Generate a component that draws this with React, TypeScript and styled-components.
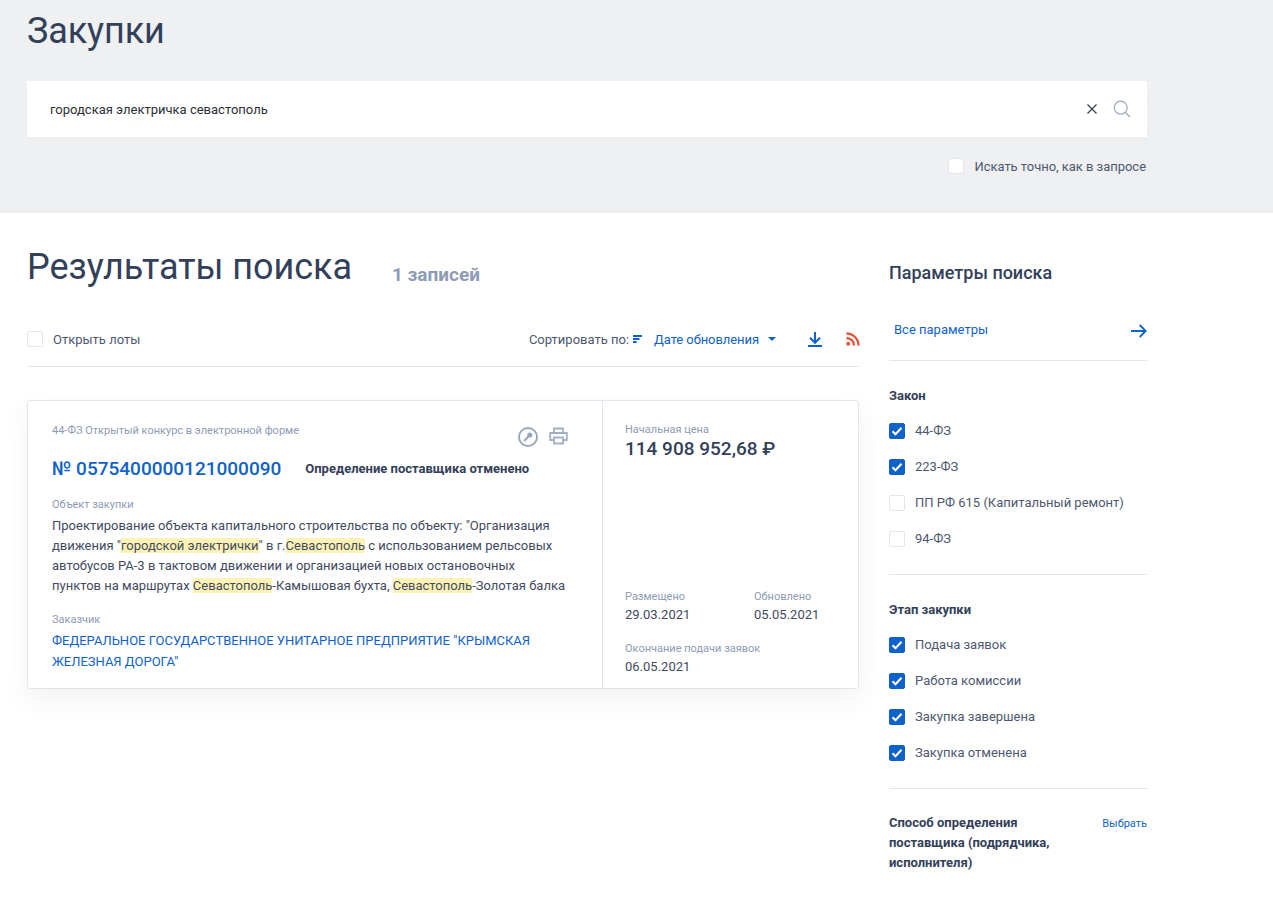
import React from "react";
import styled, { createGlobalStyle } from "styled-components";

const TEXT = "#334059";
const MUTED = "#8d9bb5";
const BLUE = "#0f62c9";
const LINE = "#e2e6ec";

const GlobalStyle = createGlobalStyle`
  html, body {
    margin: 0;
    padding: 0;
    height: 906px;
    overflow: hidden;
    background: #fff;
  }
  body {
    font-family: Roboto, "Liberation Sans", sans-serif;
    color: ${TEXT};
  }
`;

const Header = styled.header`
  height: 213px;
  box-sizing: border-box;
  padding: 0 126px 0 27px;
  background: #eef0f2;
`;

const PageTitle = styled.h1`
  margin: 0;
  height: 81px;
  padding-top: 10px;
  box-sizing: border-box;
  font-size: 36px;
  line-height: 42px;
  font-weight: 400;
  letter-spacing: -0.1px;
  color: ${TEXT};
`;

const SearchBox = styled.div`
  height: 56px;
  padding: 0 16px 0 23px;
  display: flex;
  align-items: center;
  background: #fff;
  box-shadow: 0 6px 20px rgba(51, 64, 89, 0.012);
`;

const SearchText = styled.div`
  flex: 1;
  font-size: 13px;
  color: #2b2f36;
`;

const SearchIcons = styled.div`
  display: flex;
  align-items: center;
  gap: 15px;
`;

const ExactRow = styled.div`
  margin-top: 21px;
  padding-right: 1px;
  display: flex;
  justify-content: flex-end;
  align-items: center;
  gap: 10px;
  font-size: 13px;
  letter-spacing: -0.03px;
  color: #4d5870;
`;

const Box = styled.span<{ $checked?: boolean }>`
  width: 16px;
  height: 16px;
  flex-shrink: 0;
  box-sizing: border-box;
  border-radius: 2px;
  display: inline-flex;
  align-items: center;
  justify-content: center;
  background: ${(p) => (p.$checked ? BLUE : "#fff")};
  border: 1px solid ${(p) => (p.$checked ? BLUE : "#e3e6eb")};
`;

const Main = styled.main`
  padding: 0 126px 0 27px;
  display: flex;
  gap: 30px;
  align-items: flex-start;
`;

const Results = styled.section`
  width: 832px;
  flex-shrink: 0;
`;

const ResultsHead = styled.div`
  height: 103px;
  padding-top: 33px;
  box-sizing: border-box;
  display: flex;
  align-items: flex-start;
  gap: 40px;
`;

const ResultsTitle = styled.h2`
  margin: 0;
  font-size: 36px;
  line-height: 42px;
  font-weight: 400;
  letter-spacing: -0.05px;
`;

const ResultsCount = styled.span`
  margin-top: 18px;
  font-size: 19px;
  line-height: 22px;
  font-weight: 700;
  color: ${MUTED};
`;

const Toolbar = styled.div`
  height: 46px;
  padding-bottom: 4px;
  display: flex;
  align-items: center;
  justify-content: space-between;
  border-bottom: 1px solid ${LINE};
  font-size: 13px;
`;

const OpenLots = styled.div`
  display: flex;
  align-items: center;
  gap: 10px;
  color: #4d5870;
`;

const SortGroup = styled.div`
  margin-right: -1px;
  display: flex;
  align-items: center;
  color: #4d5870;
`;

const SortValue = styled.span`
  margin-left: 12px;
  letter-spacing: -0.07px;
  color: ${BLUE};
`;

const Caret = styled.span`
  margin-left: 9px;
  width: 0;
  height: 0;
  border-left: 4px solid transparent;
  border-right: 4px solid transparent;
  border-top: 4px solid ${BLUE};
`;

const ToolIcon = styled.span<{ $gap: number }>`
  display: inline-flex;
  margin-left: ${(p) => p.$gap}px;
`;

const SortIcon = styled.svg`
  margin-left: 4px;
`;

const Card = styled.article`
  margin-top: 33px;
  height: 289px;
  box-sizing: border-box;
  display: flex;
  border: 1px solid ${LINE};
  border-radius: 3px;
  box-shadow: 0 10px 24px rgba(51, 64, 89, 0.07);
`;

const CardMain = styled.div`
  width: 575px;
  box-sizing: border-box;
  padding: 23px 24px 0;
  border-right: 1px solid ${LINE};
`;

const CardAside = styled.div`
  flex: 1;
  padding: 22px 23px 0 22px;
  display: flex;
  flex-direction: column;
`;

const TypeRow = styled.div`
  height: 26px;
  display: flex;
  justify-content: space-between;
  align-items: flex-start;
`;

const SmallLabel = styled.div`
  font-size: 11px;
  line-height: 13px;
  color: ${MUTED};
`;

const CardIcons = styled.div`
  display: flex;
  gap: 11px;
  margin-top: 3px;
  margin-right: 10px;
`;

const NumberRow = styled.div`
  margin-top: 7px;
  display: flex;
  align-items: center;
  gap: 24px;
`;

const OrderNumber = styled.a`
  font-size: 19px;
  line-height: 24px;
  font-weight: 500;
  color: ${BLUE};
`;

const Status = styled.span`
  margin-bottom: 2px;
  font-size: 13px;
  font-weight: 700;
`;

const SectionLabel = styled(SmallLabel)`
  margin-top: 17px;
`;

const Description = styled.p`
  margin: 5px 0 0;
  font-size: 13px;
  line-height: 20px;
  color: #3f4a61;
  white-space: nowrap;
`;

const Mark = styled.mark`
  background: #fef3b4;
  color: inherit;
`;

const Customer = styled.a`
  display: block;
  margin-top: 4px;
  font-size: 13px;
  line-height: 21px;
  color: ${BLUE};
  white-space: nowrap;
`;

const Price = styled.div`
  margin-top: 2px;
  font-size: 19px;
  line-height: 22px;
  font-weight: 500;
`;

const Dates = styled.div`
  margin-top: auto;
  padding-bottom: 14px;
  display: grid;
  grid-template-columns: 129px 1fr;
  row-gap: 20px;
`;

const DateCell = styled.div<{ $wide?: boolean }>`
  grid-column: ${(p) => (p.$wide ? "1 / 3" : "auto")};
`;

const DateValue = styled.div`
  margin-top: 4px;
  font-size: 13px;
  line-height: 15px;
  color: #3f4a61;
`;

const Sidebar = styled.aside`
  width: 258px;
  flex-shrink: 0;
`;

const SideTitle = styled.h3`
  margin: 0;
  padding-top: 49px;
  font-size: 18px;
  line-height: 22px;
  font-weight: 500;
`;

const AllParams = styled.div`
  margin-top: 31px;
  height: 46px;
  padding: 0 0 16px 5px;
  box-sizing: border-box;
  display: flex;
  align-items: center;
  justify-content: space-between;
  border-bottom: 1px solid ${LINE};
  font-size: 13px;
  color: ${BLUE};
`;

const ArrowIcon = styled.svg`
  margin-top: 3px;
`;

const Group = styled.div`
  padding-top: 26.5px;
  padding-bottom: 17.5px;
  border-bottom: 1px solid ${LINE};
`;

const GroupTitle = styled.div`
  font-size: 13px;
  line-height: 15px;
  font-weight: 700;
  margin-bottom: 10px;
`;

const OptionRow = styled.label`
  height: 36px;
  display: flex;
  align-items: center;
  gap: 10px;
  font-size: 13px;
  color: #4d5870;
`;

const MethodGroup = styled.div`
  padding-top: 24px;
  display: flex;
  justify-content: space-between;
  align-items: flex-start;
`;

const MethodTitle = styled.div`
  width: 175px;
  font-size: 13px;
  line-height: 20px;
  font-weight: 700;
`;

const PickLink = styled.a`
  margin-top: 3px;
  font-size: 11px;
  line-height: 15px;
  color: ${BLUE};
`;

const Check = () => (
  <svg width="12" height="10" viewBox="0 0 12 10" fill="none">
    <path d="M1.5 5.2 4.5 8.2 10.5 1.8" stroke="#fff" strokeWidth="2" />
  </svg>
);

const Option = ({ label, checked }: { label: string; checked?: boolean }) => (
  <OptionRow>
    <Box $checked={checked}>{checked && <Check />}</Box>
    {label}
  </OptionRow>
);

export default function App() {
  return (
    <>
      <GlobalStyle />
      <Header>
        <PageTitle>Закупки</PageTitle>
        <SearchBox>
          <SearchText>городская электричка севастополь</SearchText>
          <SearchIcons>
            <svg width="12" height="12" viewBox="0 0 12 12" fill="none">
              <path d="M1.5 1.5 10.5 10.5M10.5 1.5 1.5 10.5" stroke="#3b4150" strokeWidth="1.3" />
            </svg>
            <svg width="18" height="18" viewBox="0 0 18 18" fill="none">
              <circle cx="7.7" cy="7.7" r="6.5" stroke="#9aa7c0" strokeWidth="1.2" />
              <path d="M12.5 12.5 17 17" stroke="#9aa7c0" strokeWidth="1.2" />
            </svg>
          </SearchIcons>
        </SearchBox>
        <ExactRow>
          <Box />
          Искать точно, как в запросе
        </ExactRow>
      </Header>
      <Main>
        <Results>
          <ResultsHead>
            <ResultsTitle>Результаты поиска</ResultsTitle>
            <ResultsCount>1 записей</ResultsCount>
          </ResultsHead>
          <Toolbar>
            <OpenLots>
              <Box />
              Открыть лоты
            </OpenLots>
            <SortGroup>
              Сортировать по:
              <SortIcon width="9" height="8" viewBox="0 0 9 8">
                <path d="M0 0h9v2H0zM0 3h6.5v2H0zM0 6h3.5v2H0z" fill={BLUE} />
              </SortIcon>
              <SortValue>Дате обновления</SortValue>
              <Caret />
              <ToolIcon $gap={32}>
                <svg width="14" height="15" viewBox="0 0 14 15" fill="none">
                  <path d="M7 0v11M2 5.8l5 5 5-5M0 14h14" stroke={BLUE} strokeWidth="2" />
                </svg>
              </ToolIcon>
              <ToolIcon $gap={24}>
                <svg width="14" height="14" viewBox="0 0 14 14" fill="none">
                  <circle cx="2.2" cy="11.8" r="2" fill="#e2583e" />
                  <path d="M0.5 6a7.5 7.5 0 0 1 7.5 7.5M0.5 1.5a12 12 0 0 1 12 12" stroke="#e2583e" strokeWidth="2.4" />
                </svg>
              </ToolIcon>
            </SortGroup>
          </Toolbar>
          <Card>
            <CardMain>
              <TypeRow>
                <SmallLabel>44-ФЗ Открытый конкурс в электронной форме</SmallLabel>
                <CardIcons>
                  <svg width="20" height="20" viewBox="0 0 20 20" fill="none">
                    <circle cx="10" cy="10" r="9" stroke="#98a5bf" strokeWidth="1.9" />
                    <circle cx="11.8" cy="8" r="1.8" fill="#98a5bf" stroke="#98a5bf" strokeWidth="1.6" />
                    <path d="M10.2 9.8 6.2 14" stroke="#98a5bf" strokeWidth="2" />
                  </svg>
                  <svg width="19" height="18" viewBox="0 0 19 18" fill="none">
                    <path
                      d="M5 6V1.5h9V6M5 13H1.2V6h16.6v7H14M5 10.5h9v6H5z"
                      stroke="#a3afc6"
                      strokeWidth="1.8"
                    />
                  </svg>
                </CardIcons>
              </TypeRow>
              <NumberRow>
                <OrderNumber>№ 0575400000121000090</OrderNumber>
                <Status>Определение поставщика отменено</Status>
              </NumberRow>
              <SectionLabel>Объект закупки</SectionLabel>
              <Description>
                Проектирование объекта капитального строительства по объекту: "Организация
                <br />
                движения "<Mark>городской электрички</Mark>" в г.<Mark>Севастополь</Mark> с использованием рельсовых
                <br />
                автобусов РА-3 в тактовом движении и организацией новых остановочных
                <br />
                пунктов на маршрутах <Mark>Севастополь</Mark>-Камышовая бухта, <Mark>Севастополь</Mark>-Золотая балка
              </Description>
              <SectionLabel>Заказчик</SectionLabel>
              <Customer>
                ФЕДЕРАЛЬНОЕ ГОСУДАРСТВЕННОЕ УНИТАРНОЕ ПРЕДПРИЯТИЕ "КРЫМСКАЯ
                <br />
                ЖЕЛЕЗНАЯ ДОРОГА"
              </Customer>
            </CardMain>
            <CardAside>
              <SmallLabel>Начальная цена</SmallLabel>
              <Price>114 908 952,68 ₽</Price>
              <Dates>
                <DateCell>
                  <SmallLabel>Размещено</SmallLabel>
                  <DateValue>29.03.2021</DateValue>
                </DateCell>
                <DateCell>
                  <SmallLabel>Обновлено</SmallLabel>
                  <DateValue>05.05.2021</DateValue>
                </DateCell>
                <DateCell $wide>
                  <SmallLabel>Окончание подачи заявок</SmallLabel>
                  <DateValue>06.05.2021</DateValue>
                </DateCell>
              </Dates>
            </CardAside>
          </Card>
        </Results>
        <Sidebar>
          <SideTitle>Параметры поиска</SideTitle>
          <AllParams>
            Все параметры
            <ArrowIcon width="16" height="14" viewBox="0 0 16 14" fill="none">
              <path d="M0 7h14.5M8.7 1l6 6-6 6" stroke={BLUE} strokeWidth="1.8" />
            </ArrowIcon>
          </AllParams>
          <Group>
            <GroupTitle>Закон</GroupTitle>
            <Option label="44-ФЗ" checked />
            <Option label="223-ФЗ" checked />
            <Option label="ПП РФ 615 (Капитальный ремонт)" />
            <Option label="94-ФЗ" />
          </Group>
          <Group>
            <GroupTitle>Этап закупки</GroupTitle>
            <Option label="Подача заявок" checked />
            <Option label="Работа комиссии" checked />
            <Option label="Закупка завершена" checked />
            <Option label="Закупка отменена" checked />
          </Group>
          <MethodGroup>
            <MethodTitle>Способ определения поставщика (подрядчика, исполнителя)</MethodTitle>
            <PickLink>Выбрать</PickLink>
          </MethodGroup>
        </Sidebar>
      </Main>
    </>
  );
}
